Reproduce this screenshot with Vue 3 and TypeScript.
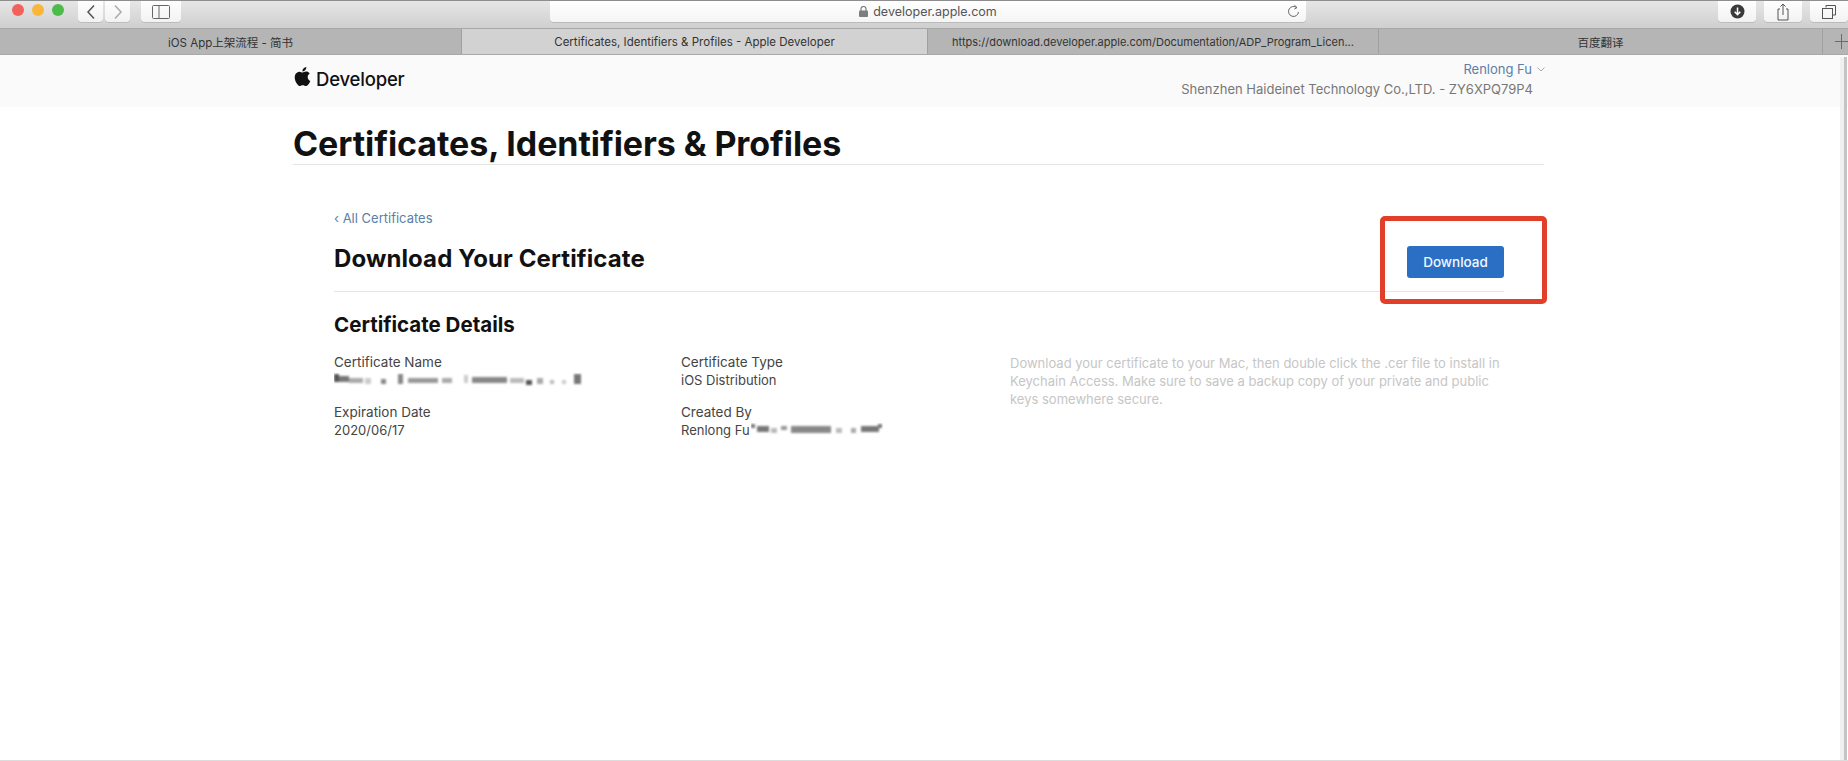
<script setup lang="ts">
interface Tab { title: string; width: string; active?: boolean; url?: boolean }
const tabs: Tab[] = [
  { title: 'iOS App上架流程 - 简书', width: '462px' },
  { title: 'Certificates, Identifiers & Profiles - Apple Developer', width: '466px', active: true },
  { title: 'https://download.developer.apple.com/Documentation/ADP_Program_Licen...', width: '451px', url: true },
  { title: '百度翻译', width: '444px' },
]
</script>

<template>
  <div class="window">
    <header class="toolbar">
      <div class="lights">
        <span class="light red"></span>
        <span class="light yellow"></span>
        <span class="light green"></span>
      </div>
      <div class="btn-pair">
        <button class="tool nav">
          <svg width="10" height="16" viewBox="0 0 10 16"><path d="M8 1.500 2 8l6 6.500" fill="none" stroke="#555" stroke-width="1.500"/></svg>
        </button>
        <button class="tool nav">
          <svg width="10" height="16" viewBox="0 0 10 16"><path d="M2 1.500 8 8l-6 6.500" fill="none" stroke="#aaa" stroke-width="1.500"/></svg>
        </button>
      </div>
      <button class="tool side">
        <svg width="18" height="14" viewBox="0 0 18 14"><rect x=".5" y=".5" width="17" height="13" rx="1" fill="none" stroke="#666"/><path d="M7 .5v13" stroke="#666" fill="none"/></svg>
      </button>
      <div class="url">
        <span class="url-text">
          <svg width="9" height="11" viewBox="0 0 9 11"><rect y="4.500" width="9" height="6.500" rx="1" fill="#7d7d7d"/><path d="M2 5V3a2.500 2.500 0 0 1 5 0v2" fill="none" stroke="#7d7d7d" stroke-width="1.200"/></svg>
          developer.apple.com
        </span>
        <svg class="reload" width="13" height="14" viewBox="0 0 13 14"><path d="M9.700 3.600A5 5 0 1 0 11.500 8" fill="none" stroke="#666" stroke-width="1"/><path d="M7.400 1.200 10 3.600 7.400 5" fill="none" stroke="#666" stroke-width="1"/></svg>
      </div>
      <div class="right-tools">
        <button class="tool end">
          <svg width="15" height="15" viewBox="0 0 15 15"><circle cx="7.500" cy="7.500" r="7" fill="#3a3a3a"/><path d="M7.500 3.500v7M4.700 7.700l2.800 3 2.800-3" fill="none" stroke="#fff" stroke-width="1.500"/></svg>
        </button>
        <button class="tool end">
          <svg width="14" height="18" viewBox="0 0 14 18"><path d="M4 6H2v11h10V6h-2M7 12V1M4.500 3.500 7 1l2.500 2.500" fill="none" stroke="#555"/></svg>
        </button>
        <button class="tool end">
          <svg width="16" height="16" viewBox="0 0 16 16"><path d="M5 3.500V1.500h9.500V11H11.500" fill="none" stroke="#555"/><rect x="1.500" y="4.500" width="10" height="10" fill="none" stroke="#555"/></svg>
        </button>
      </div>
    </header>

    <nav class="tabs">
      <div
        v-for="t in tabs"
        :key="t.title"
        class="tab"
        :class="{ active: t.active, 'url-tab': t.url }"
        :style="{ width: t.width }"
      >{{ t.title }}</div>
      <div class="tab-add">
        <svg width="13" height="15" viewBox="0 0 13 15"><path d="M6.500 0v15M0 7.500h13" stroke="#6a6a6a" stroke-width="1"/></svg>
      </div>
    </nav>

    <div class="dev-bar">
      <div class="brand">
        <svg class="apple" width="19" height="21" viewBox="0 0 24 24"><path fill="#111" d="M12.152 6.896c-.948 0-2.415-1.078-3.960-1.040-2.040.027-3.910 1.183-4.961 3.014-2.117 3.675-.546 9.103 1.519 12.090 1.013 1.454 2.208 3.090 3.792 3.039 1.520-.065 2.090-.987 3.935-.987 1.831 0 2.350.987 3.960.948 1.637-.026 2.676-1.480 3.676-2.948 1.156-1.688 1.636-3.325 1.662-3.415-.039-.013-3.182-1.221-3.220-4.857-.026-3.040 2.480-4.494 2.597-4.559-1.429-2.090-3.623-2.324-4.390-2.376-2-.156-3.675 1.090-4.610 1.090zM15.530 3.830c.843-1.012 1.400-2.427 1.245-3.830-1.207.052-2.662.805-3.532 1.818-.780.896-1.454 2.338-1.273 3.714 1.338.104 2.715-.688 3.559-1.701"/></svg>
        <span class="brand-text">Developer</span>
      </div>
      <div class="account">
        <div class="user">Renlong Fu<svg width="8" height="5" viewBox="0 0 8 5"><path d="M.5.5 4 4 7.500.5" fill="none" stroke="#aaa"/></svg></div>
        <div class="team">Shenzhen Haideinet Technology Co.,LTD. - ZY6XPQ79P4</div>
      </div>
    </div>

    <main class="page">
      <h1 class="page-title">Certificates, Identifiers &amp; Profiles</h1>
      <section class="content">
        <a class="back">‹ All Certificates</a>
        <div class="head-row">
          <h2>Download Your Certificate</h2>
          <div class="action">
            <button class="download">Download</button>
            <span class="highlight"></span>
          </div>
        </div>
        <h3>Certificate Details</h3>
        <div class="details">
          <div class="col">
            <div class="field">
              <div class="label">Certificate Name</div>
              <svg class="masked" width="252" height="14" viewBox="0 0 252 14">
                <g class="pix">
                  <rect x="0" y="1" width="5" height="8" fill="#555"/><rect x="5" y="3" width="10" height="6" fill="#777"/><rect x="15" y="5" width="14" height="5" fill="#aaa"/><rect x="31" y="5" width="6" height="6" fill="#ccc"/>
                  <rect x="47" y="6" width="5" height="5" fill="#888"/><rect x="64" y="1" width="5" height="10" fill="#888"/><rect x="74" y="5" width="30" height="5" fill="#999"/><rect x="108" y="5" width="10" height="5" fill="#aaa"/>
                  <rect x="130" y="2" width="4" height="8" fill="#ccc"/><rect x="138" y="4" width="35" height="6" fill="#888"/><rect x="176" y="5" width="14" height="5" fill="#bbb"/><rect x="192" y="7" width="6" height="5" fill="#555"/>
                  <rect x="203" y="5" width="6" height="6" fill="#aaa"/><rect x="216" y="7" width="4" height="4" fill="#bbb"/><rect x="228" y="7" width="4" height="4" fill="#ccc"/><rect x="240" y="1" width="7" height="10" fill="#777"/>
                </g>
              </svg>
            </div>
            <div class="field">
              <div class="label">Expiration Date</div>
              <div class="value">2020/06/17</div>
            </div>
          </div>
          <div class="col second">
            <div class="field">
              <div class="label">Certificate Type</div>
              <div class="value">iOS Distribution</div>
            </div>
            <div class="field">
              <div class="label">Created By</div>
              <div class="value created">Renlong Fu
                <svg class="masked-inline" width="132" height="14" viewBox="0 0 132 14">
                  <g class="pix">
                    <rect x="0" y="1" width="4" height="4" fill="#777"/><rect x="6" y="3" width="12" height="6" fill="#777"/><rect x="20" y="5" width="6" height="5" fill="#bbb"/><rect x="30" y="3" width="6" height="4" fill="#999"/>
                    <rect x="40" y="3" width="40" height="7" fill="#888"/><rect x="85" y="5" width="6" height="5" fill="#bbb"/><rect x="100" y="5" width="5" height="5" fill="#aaa"/><rect x="110" y="3" width="18" height="6" fill="#777"/><rect x="127" y="1" width="4" height="4" fill="#777"/>
                  </g>
                </svg>
              </div>
            </div>
          </div>
          <p class="note">Download your certificate to your Mac, then double click the .cer file to install in Keychain Access. Make sure to save a backup copy of your private and public keys somewhere secure.</p>
        </div>
      </section>
    </main>
    <div class="scrollbar"></div>
  </div>
</template>

<style>
html, body { margin: 0; background: #fff; }
</style>

<style scoped>
.window {
  position: relative;
  width: 1848px;
  height: 761px;
  overflow: hidden;
  display: flex;
  flex-direction: column;
  background: #fff;
  border-bottom: 1px solid #dcdcdc;
  box-sizing: border-box;
  font-family: Inter, "Noto Sans CJK SC", sans-serif;
  color: #1d1d1f;
}
button { border: none; padding: 0; font-family: inherit; }

.toolbar {
  height: 28px;
  box-sizing: border-box;
  flex: none;
  display: flex;
  align-items: flex-start;
  background: linear-gradient(#e6e6e6, #cfcfcf);
  border-top: 1px solid #8e8e8e;
}
.lights { display: flex; gap: 8px; padding: 3px 0 0 12px; width: 78px; box-sizing: border-box; }
.light { width: 12px; height: 12px; border-radius: 50%; }
.red { background: #f4605a; }
.yellow { background: #f8b73c; }
.green { background: #4dbb4a; }
.tool {
  height: 21px;
  background: linear-gradient(#fefefe, #f2f2f2);
  border-radius: 0 0 4px 4px;
  box-shadow: 0 1px 0 #bbb;
  display: flex;
  align-items: center;
  justify-content: center;
}
.btn-pair { display: flex; gap: 2px; }
.nav { width: 25px; }
.side { width: 40px; margin-left: 11px; }
.url {
  width: 756px;
  margin-left: 369px;
  height: 21px;
  background: linear-gradient(#fff, #f5f5f5);
  border-radius: 0 0 4px 4px;
  box-shadow: 0 1px 0 #bbb;
  display: flex;
  align-items: center;
  justify-content: center;
  position: relative;
  font-size: 12.500px;
  color: #555;
}
.url-text { display: flex; align-items: center; gap: 5px; }
.reload { position: absolute; right: 6px; top: 3px; }
.right-tools { display: flex; gap: 8px; margin-left: auto; }
.end { width: 38px; }

.tabs {
  flex: none;
  height: 27px;
  display: flex;
  background: #b5b5b5;
  border-top: 1px solid #a8a8a8;
  border-bottom: 1px solid #a9a9a9;
  box-sizing: border-box;
  font-size: 11.500px;
  color: #333;
}
.tab {
  flex: none;
  box-sizing: border-box;
  display: flex;
  align-items: center;
  justify-content: center;
  border-right: 1px solid #a0a0a0;
  white-space: nowrap;
}
.tab.active { background: #d2d2d2; }
.tab.url-tab { font-size: 11px; }
.tab-add { flex: 1; min-width: 0; display: flex; align-items: center; justify-content: flex-end; overflow: hidden; }

.dev-bar {
  flex: none;
  height: 52px;
  background: #fafafa;
  padding: 0 315px 0 293px;
  display: flex;
  justify-content: space-between;
}
.brand { display: flex; align-items: center; gap: 4px; height: 46px; font-size: 18.500px; font-weight: 500; color: #111; letter-spacing: -0.2px; }
.brand-text { margin-top: 1px; }
.apple { margin-top: -3px; }
.account { text-align: right; font-size: 13px; padding-top: 5px; }
.user { color: #5b7fa6; line-height: 18px; margin-right: -12px; display: flex; align-items: center; justify-content: flex-end; gap: 5px; }
.team { color: #777; line-height: 18px; margin-top: 2px; }

.page { padding: 0 304px 0 293px; }
.page-title {
  margin: 17px 0 0;
  font-size: 34px;
  line-height: 40px;
  font-weight: 700;
  color: #111;
  letter-spacing: -0.08px;
  border-bottom: 1px solid #e5e5e5;
}
.content { padding: 0 40px 0 41px; position: relative; }
.back { display: block; margin-top: 44px; font-size: 13px; line-height: 18px; color: #5b7fa6; }
.head-row {
  display: flex;
  align-items: flex-start;
  justify-content: space-between;
  margin-top: 9px;
  height: 55px;
  border-bottom: 1px solid #e5e5e5;
}
h2 { margin: 8px 0 0; font-size: 24px; line-height: 29px; font-weight: 700; color: #111; letter-spacing: .1px; }
.action { position: relative; margin-top: 10px; }
.download {
  display: block;
  width: 97px;
  height: 32px;
  border-radius: 3px;
  background: #2a6fc4;
  color: #f2f7ff;
  font-size: 13.500px;
  font-weight: 500;
}
.highlight {
  position: absolute;
  left: -27px;
  top: -30px;
  width: 167px;
  height: 88px;
  box-sizing: border-box;
  border: 5px solid #e23f2a;
  border-radius: 5px;
  pointer-events: none;
}
h3 { margin: 20px 0 0; font-size: 20.500px; line-height: 26px; font-weight: 700; color: #111; }
.details { display: flex; margin-top: 15px; }
.col { width: 347px; flex: none; }
.col.second { width: 329px; }
.field { height: 50px; font-size: 13px; line-height: 18px; color: #444; }
.label { height: 18px; font-size: 13.500px; }
.value { height: 18px; white-space: nowrap; display: flex; align-items: center; gap: 1px; }
.masked { display: block; margin-top: 2px; }
.pix { filter: blur(1px); }
.note {
  margin: 1px 0 0;
  width: 495px;
  font-size: 13px;
  line-height: 18px;
  color: #c6c6c6;
}
.scrollbar {
  position: absolute;
  right: 1px;
  top: 57px;
  bottom: 0;
  width: 7px;
  box-sizing: border-box;
  background: #f0f0f0;
  border-right: 3px solid #c4c4c4;
}
</style>
